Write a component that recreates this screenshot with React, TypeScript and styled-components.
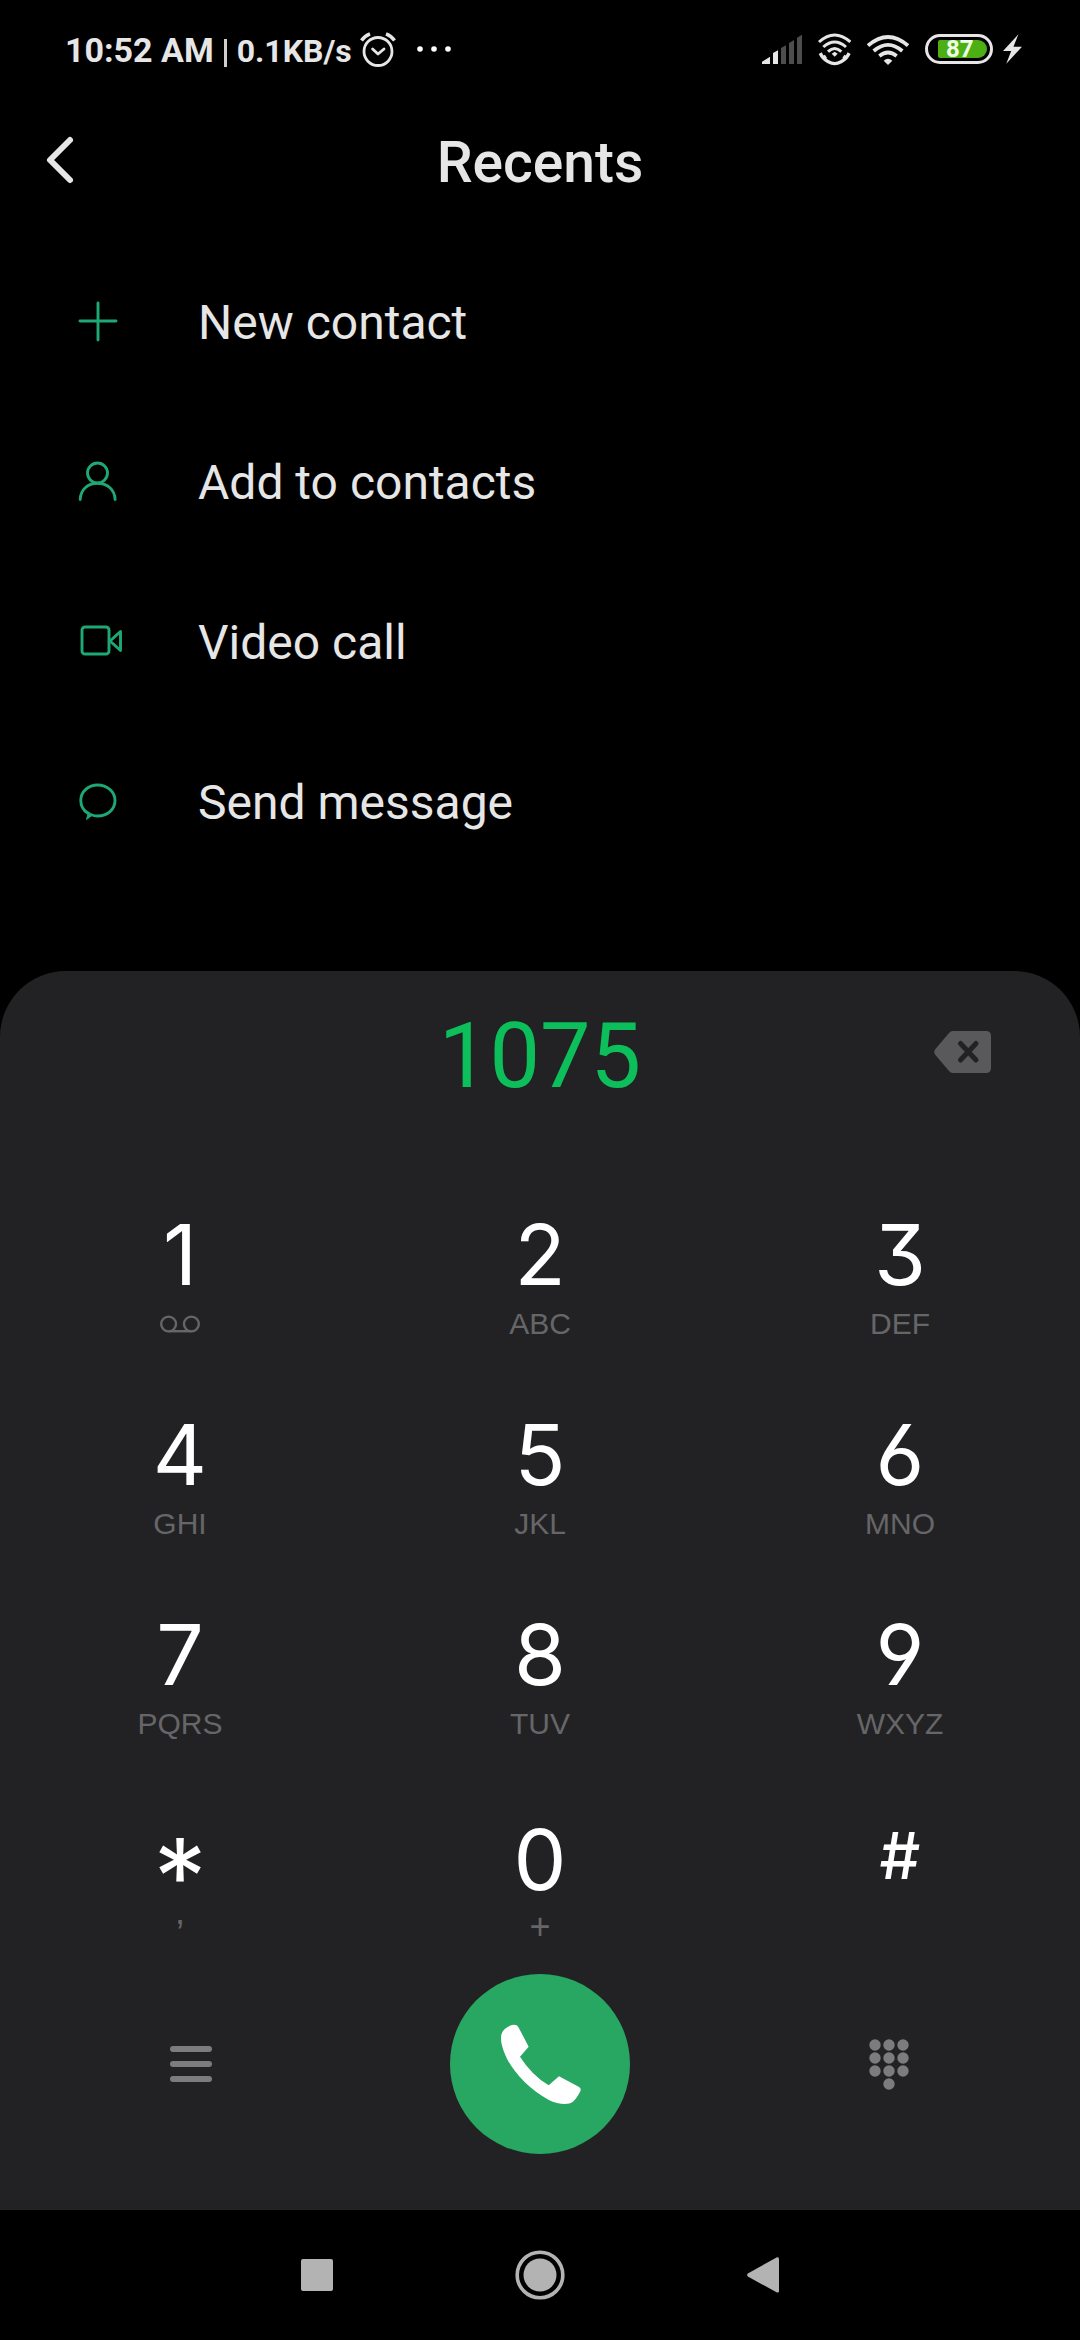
import React from "react";
import styled, { createGlobalStyle } from "styled-components";

const GlobalStyle = createGlobalStyle`
  *, *::before, *::after { box-sizing: border-box; }
  body { margin: 0; background: #000; color: #e6e6e6; font-family: Roboto, "Liberation Sans", sans-serif; }
  button, input { margin: 0; padding: 0; border: 0; background: none; color: inherit; font: inherit; }
  svg { display: block; }
`;

const Screen = styled.div`
  display: flex;
  flex-direction: column;
  min-height: 100vh;
`;

const StatusBar = styled.div`
  display: flex;
  align-items: center;
  justify-content: space-between;
  height: 98px;
  padding: 0 58px 0 65px;
`;

const StatusGroup = styled.div<{ $gap: number }>`
  display: flex;
  align-items: center;
  gap: ${(p) => p.$gap}px;
`;

const StatusText = styled.div`
  display: flex;
  align-items: baseline;
  gap: 10px;
  padding-top: 2px;
  font-weight: 700;
  line-height: 40px;
`;

const Clock = styled.span`
  font-size: 34px;
`;

const NetSpeed = styled.span`
  font-size: 32px;
`;

const Divider = styled.span`
  align-self: center;
  width: 3px;
  height: 28px;
  margin-top: 6px;
  background: #cfcfcf;
`;

const Battery = styled.div`
  display: flex;
  align-items: center;
  width: 68px;
  height: 30px;
  padding: 0 3px 0 10px;
  border: 3px solid #e6e6e6;
  border-radius: 15px;
`;

const BatteryLevel = styled.span`
  flex: 1;
  height: 18px;
  padding-left: 8px;
  border-radius: 2px 9px 9px 2px;
  background: #4caf14;
  color: #f0ffe8;
  font-size: 24px;
  font-weight: 700;
  line-height: 19px;
`;

const Header = styled.header`
  display: grid;
  grid-template-columns: 1fr auto 1fr;
  align-items: center;
  height: 128px;
  padding: 0 40px;
`;

const BackButton = styled.button`
  justify-self: start;
`;

const Title = styled.h1`
  margin: 0;
  padding-top: 2px;
  font-size: 57px;
  font-weight: 500;
  line-height: 68px;
`;

const ActionList = styled.ul`
  margin: 15px 0 0;
  padding: 0;
  list-style: none;
`;

const ActionButton = styled.button`
  display: flex;
  align-items: center;
  gap: 76px;
  width: 100%;
  height: 160px;
  padding: 0 74px;
  font-size: 48px;
  line-height: 56px;
  text-align: left;
`;

const ActionLabel = styled.span`
  padding-top: 3px;
`;

const Dialer = styled.section`
  flex: 1;
  margin-top: 90px;
  border-radius: 66px 66px 0 0;
  background: #222224;
`;

const NumberRow = styled.div`
  display: grid;
  grid-template-columns: 1fr 2fr 1fr;
  align-items: center;
  height: 162px;
  padding: 0 89px;
`;

const NumberField = styled.input`
  grid-column: 2;
  width: 100%;
  padding-top: 9px;
  color: #0dbf5b;
  font-size: 90px;
  line-height: 106px;
  text-align: center;
  outline: none;
`;

const DeleteButton = styled.button`
  justify-self: end;
`;

const Keypad = styled.div`
  display: grid;
  grid-template-columns: repeat(3, 1fr);
  grid-template-rows: 200px 200px 205px 156px;
  padding-top: 80px;
`;

const Key = styled.button`
  display: flex;
  flex-direction: column;
  align-items: center;
  gap: 7px;
`;

const Digit = styled.span<{ $size?: number; $line?: number; $weight?: number }>`
  height: 84px;
  color: #fff;
  font-family: Inter, Roboto, sans-serif;
  font-feature-settings: "cv03", "cv04", "cv09";
  font-size: ${(p) => p.$size ?? 84}px;
  font-weight: ${(p) => p.$weight ?? 400};
  line-height: ${(p) => p.$line ?? 84}px;
`;

const Letters = styled.span<{ $size?: number; $line?: number }>`
  height: 40px;
  color: #666668;
  font-family: "Liberation Sans", Arial, sans-serif;
  font-size: ${(p) => p.$size ?? 30}px;
  line-height: ${(p) => p.$line ?? 40}px;
`;

const VoicemailMark = styled.span`
  display: grid;
  place-items: center;
  height: 40px;
`;

const BottomActions = styled.div`
  display: grid;
  grid-template-columns: repeat(3, 1fr);
  place-items: center;
  padding: 0 16px 56px;
`;

const CallButton = styled.button`
  width: 180px;
  height: 180px;
  border-radius: 50%;
  background: #28a762;
`;

const NavBar = styled.nav`
  display: flex;
  justify-content: center;
  height: 130px;
`;

const NavButton = styled.button`
  display: grid;
  place-items: center;
  width: 223px;
`;

const Voicemail = () => (
  <VoicemailMark>
    <svg width="40" height="18" viewBox="0 0 40 18" fill="none" stroke="#666668" strokeWidth="2.4">
      <circle cx="8.6" cy="9" r="7.4" />
      <circle cx="31.4" cy="9" r="7.4" />
      <path d="M8.6 16.2H31.4" />
    </svg>
  </VoicemailMark>
);

type KeyData = {
  label: string;
  letters?: string;
  size?: number;
  line?: number;
  weight?: number;
  lettersSize?: number;
  lettersLine?: number;
};

const keys: KeyData[] = [
  { label: "1" },
  { label: "2", letters: "ABC" },
  { label: "3", letters: "DEF" },
  { label: "4", letters: "GHI" },
  { label: "5", letters: "JKL" },
  { label: "6", letters: "MNO" },
  { label: "7", letters: "PQRS" },
  { label: "8", letters: "TUV" },
  { label: "9", letters: "WXYZ" },
  { label: "*", letters: ",", size: 106, line: 117, lettersSize: 36, lettersLine: 6 },
  { label: "0", letters: "+", lettersSize: 36, lettersLine: 36 },
  { label: "#", letters: "", size: 64, line: 75, weight: 500 },
];

const actions = [
  { text: "New contact", icon: <path d="M24 6V43M6 24H42" /> },
  {
    text: "Add to contacts",
    icon: (
      <>
        <circle cx="23.5" cy="16" r="10" />
        <path d="M6.2 42.5C6.5 33 13.5 26.2 23.5 26.2S40.8 33 41.1 42.5" />
      </>
    ),
  },
  {
    text: "Video call",
    icon: (
      <>
        <rect x="8" y="10" width="27" height="27" rx="3" />
        <path d="M36 24L46.500 14.500V33.500Z" />
      </>
    ),
  },
  {
    text: "Send message",
    icon: (
      <>
        <path d="M13.500 36C9 33 6.800 28.500 6.800 23.500C6.800 14.500 14.300 8 23.600 8S41 14.500 41 23.500S33.500 39 23.600 39C21.200 39 19.500 38.700 18 38" />
        <path d="M11 33L14 37L12.500 42.500L18.500 38Z" fill="#1ea876" strokeWidth="1" />
      </>
    ),
  },
];

export default function App() {
  return (
    <Screen>
      <GlobalStyle />
      <StatusBar>
        <StatusGroup $gap={8}>
          <StatusText>
            <Clock>10:52 AM</Clock>
            <Divider />
            <NetSpeed>0.1KB/s</NetSpeed>
          </StatusText>
          <svg width="36" height="36" viewBox="0 0 36 36" fill="none" stroke="#e6e6e6" strokeWidth="2.8">
            <circle cx="18" cy="20.5" r="14" />
            <path d="M12.6 18L18 23L24 18" strokeLinejoin="round" strokeLinecap="round" />
            <path d="M1.500 9.500Q4.500 5 10 2.800M26 2.800Q31.500 5 34.500 9.500" strokeWidth="3.4" />
          </svg>
          <svg width="50" height="10" viewBox="0 0 50 10" fill="#fff">
            <circle cx="16" cy="5" r="2.8" />
            <circle cx="30" cy="5" r="2.8" />
            <circle cx="44" cy="5" r="2.8" />
          </svg>
        </StatusGroup>
        <StatusGroup $gap={16}>
          <svg width="40" height="31" viewBox="36 39 120 93">
            <path fill="#e6e6e6" d="M36 129V122L60 107V129ZM69 129V96L84 88V129Z" />
            <path fill="#4d4d4d" d="M93 129V81L108 73V129ZM117 129V66L132 57V129ZM141 129V50L156 41V129Z" />
          </svg>
          <svg width="33" height="33" viewBox="204 37 99 99" fill="none" stroke="#e6e6e6" strokeWidth="9">
            <path d="M207 64Q254 22 301 64M220 79Q254 49 288 79M234 93Q254 74 274 93" />
            <path d="M245 99L254 93L263 99L254 108Z" fill="#e6e6e6" stroke="none" />
            <path d="M216 108Q254 150 292 108" strokeWidth="10" />
            <path d="M209 105L218 100M299 105L290 100M217 114L228 107M291 114L280 107" strokeWidth="12" />
          </svg>
          <svg width="42" height="33" viewBox="351 36 126 99" fill="none" stroke="#e6e6e6" strokeWidth="11">
            <path d="M354 74Q414 22 474 74M371 90Q414 53 457 90M388 105Q414 84 440 105" />
            <path d="M401 119Q414 108 427 119L414 132Z" fill="#e6e6e6" stroke="none" />
          </svg>
          <StatusGroup $gap={10}>
            <Battery>
              <BatteryLevel>87</BatteryLevel>
            </Battery>
            <svg width="19" height="30" viewBox="759 42 58 90" fill="#e6e6e6">
              <path d="M806 42L759 93H784L769 132L817 80H791Z" />
            </svg>
          </StatusGroup>
        </StatusGroup>
      </StatusBar>

      <Header>
        <BackButton aria-label="Back">
          <svg width="40" height="60" viewBox="0 0 40 60" fill="none" stroke="#e6e6e6" strokeWidth="6" strokeLinecap="round" strokeLinejoin="round">
            <path d="M30 8L10 28L30 48" />
          </svg>
        </BackButton>
        <Title>Recents</Title>
      </Header>

      <ActionList>
        {actions.map((a) => (
          <li key={a.text}>
            <ActionButton>
              <svg width="48" height="48" viewBox="0 0 48 48" fill="none" stroke="#1ea876" strokeWidth="2.9" strokeLinecap="round" strokeLinejoin="round">
                {a.icon}
              </svg>
              <ActionLabel>{a.text}</ActionLabel>
            </ActionButton>
          </li>
        ))}
      </ActionList>

      <Dialer>
        <NumberRow>
          <NumberField type="tel" aria-label="Phone number" defaultValue="1075" />
          <DeleteButton aria-label="Delete digit">
            <svg width="57" height="42" viewBox="0 0 57 42">
              <path fill="#59595b" d="M19 0H52Q57 0 57 5V37Q57 42 52 42H19Q16.500 42 15 40L1 23.500Q-.6 21 1 18.500L15 2Q16.500 0 19 0Z" />
              <path d="M26.500 12.500L42 29M42 12.500L26.500 29" stroke="#222224" strokeWidth="5" strokeLinecap="round" />
            </svg>
          </DeleteButton>
        </NumberRow>
        <Keypad>
          {keys.map((k) => (
            <Key key={k.label}>
              <Digit $size={k.size} $line={k.line} $weight={k.weight}>{k.label}</Digit>
              {k.letters === undefined ? (
                <Voicemail />
              ) : (
                <Letters $size={k.lettersSize} $line={k.lettersLine}>{k.letters}</Letters>
              )}
            </Key>
          ))}
        </Keypad>
        <BottomActions>
          <button aria-label="Menu">
            <svg width="42" height="36" viewBox="0 0 42 36" fill="#7c7c7e">
              <rect width="42" height="6" rx="3" />
              <rect y="15" width="42" height="6" rx="3" />
              <rect y="30" width="42" height="6" rx="3" />
            </svg>
          </button>
          <CallButton aria-label="Call">
            <svg width="180" height="180" viewBox="30 42 540 540" fill="#fff">
              <path d="M216 195Q230 192 235 201L266 260L240 290Q275 345 326 376L357 349L416 380Q425 385 421 394Q410 416 398 426C385 435 355 434 325 419C270 390 222 338 201 296C189 272 182 248 183 230C184 212 200 201 216 195Z" />
            </svg>
          </CallButton>
          <button aria-label="Hide keypad">
            <svg width="40" height="51" viewBox="0 0 40 51" fill="#7c7c7e">
              {[6, 19, 32].map((y) => [6, 20, 34].map((x) => <circle key={`${x}-${y}`} cx={x} cy={y} r="5.7" />))}
              <circle cx="20" cy="45" r="5.7" />
            </svg>
          </button>
        </BottomActions>
      </Dialer>

      <NavBar>
        <NavButton aria-label="Recent apps">
          <svg width="32" height="32" viewBox="0 0 32 32" fill="#b3b3b3">
            <rect width="32" height="32" rx="2" />
          </svg>
        </NavButton>
        <NavButton aria-label="Home">
          <svg width="50" height="50" viewBox="0 0 50 50">
            <circle cx="25" cy="25" r="22.8" fill="none" stroke="#b3b3b3" strokeWidth="3.6" />
            <circle cx="25" cy="25" r="16.5" fill="#b3b3b3" />
          </svg>
        </NavButton>
        <NavButton aria-label="Back">
          <svg width="32" height="36" viewBox="0 0 32 36" fill="#b3b3b3">
            <path d="M30 .3Q32 0 32 2V34Q32 36 30 35.500L.8 19.500Q-.5 18 .8 16.500Z" />
          </svg>
        </NavButton>
      </NavBar>
    </Screen>
  );
}
